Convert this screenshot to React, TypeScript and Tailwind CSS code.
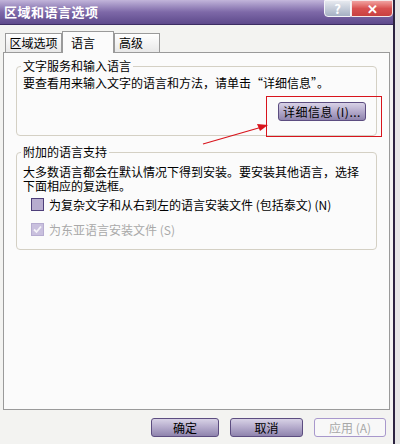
import React from "react";

const font = { fontFamily: '"SimSun", "Noto Sans CJK SC", "Liberation Sans", sans-serif' };

const XpButton = ({ label, disabled, className = "" }: { label: React.ReactNode; disabled?: boolean; className?: string }) => (
  <div
    className={
      "h-[19px] flex items-center justify-center rounded-[3px] border text-[12px] leading-none " +
      (disabled
        ? "border-[#a898cc] bg-[#f8f8f8] text-[#a8a8a8] "
        : "border-[#5c4d80] bg-gradient-to-b from-[#d8d2e6] via-[#b4aacb] to-[#8f84ad] text-black ") +
      className
    }
  >
    {label}
  </div>
);

const Checkbox = ({ checked, disabled }: { checked?: boolean; disabled?: boolean }) => (
  <div
    className={
      "w-[13px] h-[13px] shrink-0 border flex items-center justify-center " +
      (disabled ? "border-[#b6acd0] bg-[#c9c0de]" : "border-[#4e3f7a] bg-[#b7accf]")
    }
  >
    {checked && (
      <svg width="9" height="9" viewBox="0 0 9 9">
        <path d="M1 4.5 L3.5 7 L8 1.5" stroke="#f4f2f8" strokeWidth="1.8" fill="none" />
      </svg>
    )}
  </div>
);

const GroupBox = ({ title, children, className = "" }: { title: string; children: React.ReactNode; className?: string }) => (
  <div className={"relative border border-[#d4d0c4] rounded-[4px] " + className}>
    <div className="absolute -top-[7px] left-[4px] px-[2px] bg-[#fbfbfb] text-[12px] leading-[12px] text-black">{title}</div>
    {children}
  </div>
);

export default function App() {
  return (
    <div className="w-[400px] h-[444px] flex bg-[#e6e6e6] overflow-hidden" style={font}>
      <div className="w-[395px] h-full flex flex-col bg-[#f3f3f1] border-r-[2px] border-[#2c2340] relative">
        {/* title bar */}
        <div className="h-[25px] shrink-0 flex items-center justify-between bg-gradient-to-b from-[#c2b5da] via-[#7e69a8] to-[#5e4a8c] border-b border-[#3c2d62]">
          <span className="pl-[4px] text-white font-bold text-[13px] tracking-[0.5px]">区域和语言选项</span>
          <div className="flex self-start">
            <div className="w-[27px] h-[17px] flex items-center justify-center rounded-bl-[4px] bg-gradient-to-b from-[#e6e9ef] to-[#a5b0c3] border border-[#f4f4f8] text-white font-bold text-[13px]">
              ?
            </div>
            <div className="w-[42px] h-[17px] flex items-center justify-center rounded-br-[4px] bg-gradient-to-b from-[#f0a0a0] via-[#d85050] to-[#c84040] border border-[#f4e8e8] text-white font-bold text-[13px]">
              ✕
            </div>
          </div>
        </div>

        {/* body */}
        <div className="flex-1 flex flex-col px-[3px] pt-[6px]">
          {/* tabs */}
          <div className="flex items-end h-[21px] pl-[2px] relative z-10">
            <div className="w-[57px] h-[19px] border border-b-0 border-[#9a9a9a] bg-gradient-to-b from-[#ffffff] to-[#e8e8e8] text-[12px] flex items-center justify-center">区域选项</div>
            <div className="w-[52px] h-[22px] border border-b-0 border-[#9a9a9a] bg-[#fbfbfb] text-[12px] flex items-start pl-[8px] pt-[2px] -mb-[1px]">语言</div>
            <div className="w-[46px] h-[19px] border border-b-0 border-[#9a9a9a] bg-gradient-to-b from-[#ffffff] to-[#e8e8e8] text-[12px] flex items-center pl-[4px]">高级</div>
          </div>
          {/* tab panel */}
          <div className="h-[358px] border border-[#9a9a9a] bg-[#fbfbfb] px-[12px] pt-[13px] flex flex-col">
            <GroupBox title="文字服务和输入语言" className="h-[70px]">
              <div className="pl-[6px] pt-[9px] text-[12px] leading-[13px]">要查看用来输入文字的语言和方法，请单击“详细信息”。</div>
              <div className="flex justify-end pr-[10px] pt-[13px]">
                <XpButton label="详细信息 (I)..." className="w-[88px] tracking-[0.5px]" />
              </div>
            </GroupBox>

            <GroupBox title="附加的语言支持" className="h-[98px] mt-[16px]">
              <div className="pl-[6px] pt-[12px] text-[12px] leading-[14px]">
                <div>大多数语言都会在默认情况下得到安装。要安装其他语言，选择</div>
                <div>下面相应的复选框。</div>
              </div>
              <div className="flex items-center gap-[5px] pl-[14px] mt-[5px] text-[12px] leading-[13px]">
                <Checkbox />
                <span>为复杂文字和从右到左的语言安装文件 (包括泰文) (N)</span>
              </div>
              <div className="flex items-center gap-[5px] pl-[14px] mt-[12px] text-[12px] leading-[13px] text-[#a9a9a9]">
                <Checkbox checked disabled />
                <span>为东亚语言安装文件 (S)</span>
              </div>
            </GroupBox>
          </div>

          {/* bottom buttons */}
          <div className="flex justify-end gap-[11px] pr-[4px] pt-[8px]">
            <XpButton label="确定" className="w-[68px]" />
            <XpButton label="取消" className="w-[73px]" />
            <XpButton label="应用 (A)" disabled className="w-[72px]" />
          </div>
        </div>

        {/* annotation overlays */}
        <div className="absolute left-[266px] top-[96px] w-[116px] h-[41px] border border-[#d8141c] pointer-events-none" />
        <svg className="absolute left-0 top-0 pointer-events-none" width="395" height="444">
          <line x1="203" y1="144" x2="262" y2="127" stroke="#d8141c" strokeWidth="1.2" />
          <path d="M268 125 L257 124 L260 131 Z" fill="#d8141c" />
        </svg>
      </div>
    </div>
  );
}
